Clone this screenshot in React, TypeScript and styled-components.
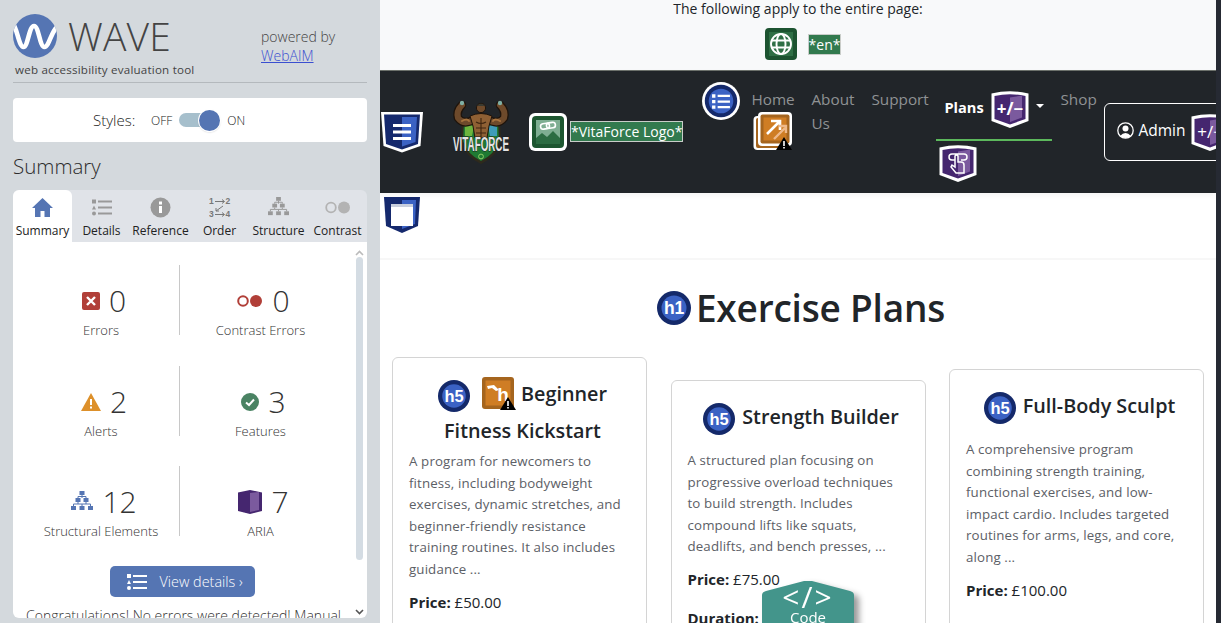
import React from 'react';
import styled, { createGlobalStyle } from 'styled-components';

const Global = createGlobalStyle`
  html, body { margin: 0; padding: 0; height: 623px; overflow: hidden; background: #fff; }
  body { font-family: "Open Sans", "Liberation Sans", sans-serif; }
  #root { height: 623px; }
  * { box-sizing: border-box; }
`;

const Page = styled.div`
  display: flex;
  width: 1221px;
  height: 623px;
  overflow: hidden;
`;

/* ---------- WAVE sidebar ---------- */
const Sidebar = styled.aside`
  width: 380px;
  flex: none;
  height: 623px;
  background: #d4d9dd;
  padding: 14px 13px 0;
  display: flex;
  flex-direction: column;
  color: #333;
`;
const Brand = styled.div`
  display: flex;
  justify-content: space-between;
  height: 69px;
  border-bottom: 1px solid #b4b9bd;
`;
const BrandLeft = styled.div`
  display: flex;
  flex-direction: column;
`;
const LogoRow = styled.div`
  display: flex;
  align-items: center;
  gap: 11px;
  height: 44px;
`;
const WaveWord = styled.span`
  font-weight: 300;
  font-size: 39px;
  letter-spacing: 0.2px;
  line-height: 46px;
  color: #444;
`;
const Tagline = styled.div`
  font-size: 11.6px;
  line-height: 16px;
  margin: 4px 0 0 2px;
  letter-spacing: 0.2px;
  color: #444;
`;
const Powered = styled.div`
  width: 106px;
  font-size: 14px;
  font-weight: 300;
  line-height: 19px;
  padding-top: 13px;
  color: #444;
  a { color: #3a4fd0; text-decoration: underline; }
`;
const StylesBox = styled.div`
  margin-top: 15px;
  height: 44px;
  background: #fff;
  border-radius: 4px;
  display: flex;
  align-items: center;
  padding-left: 80px;
`;
const StylesLabel = styled.span`
  font-size: 15px;
  font-weight: 300;
  width: 58px;
  color: #222;
`;
const OnOff = styled.span`
  font-size: 12px;
  font-weight: 300;
  color: #222;
`;
const Toggle = styled.div`
  position: relative;
  width: 40px;
  height: 14px;
  background: #a6bfcc;
  border-radius: 7px;
  margin: 0 8px 0 7px;
  &::after {
    content: '';
    position: absolute;
    right: -1px;
    top: -3.5px;
    width: 21px;
    height: 21px;
    border-radius: 50%;
    background: #5575b3;
    box-shadow: 0 0 0 1px #fff, 0 1px 2px rgba(0,0,0,.3);
  }
`;
const SummaryTitle = styled.h2`
  margin: 10px 0 10px;
  font-size: 20.5px;
  font-weight: 300;
  line-height: 28px;
  color: #2c2c2c;
`;
const Tabs = styled.div`
  display: flex;
  height: 52px;
  background: #e0e3e8;
  border-radius: 6px 6px 0 0;
`;
const Tab = styled.div<{ $active?: boolean; $w: number }>`
  width: ${p => p.$w}px;
  flex: none;
  display: flex;
  flex-direction: column;
  align-items: center;
  padding-top: 7px;
  background: ${p => (p.$active ? '#fff' : 'transparent')};
  border-radius: ${p => (p.$active ? '6px 6px 0 0' : '0')};
  font-size: 12px;
  color: #222;
  svg { height: 21px; display: block; }
  span { margin-top: 5px; line-height: 16px; white-space: nowrap; }
`;
const Panel = styled.div`
  position: relative;
  height: 376px;
  background: #fff;
  border-radius: 0 0 6px 6px;
  overflow: hidden;
`;
const StatsGrid = styled.div`
  display: grid;
  grid-template-columns: 167px 167px;
  grid-auto-rows: 70px;
  row-gap: 30.5px;
  padding-top: 23px;
`;
const Stat = styled.div<{ $left?: boolean }>`
  display: flex;
  flex-direction: column;
  align-items: center;
  border-right: ${p => (p.$left ? '1px solid #c8c8c8' : 'none')};
  padding-left: ${p => (p.$left ? '10px' : '0')};
  width: ${p => (p.$left ? '167px' : '161px')};
`;
const StatTop = styled.div`
  display: flex;
  align-items: center;
  justify-content: center;
  gap: 9px;
  height: 44px;
  margin-top: 14px;
  padding-left: 6px;
  svg { display: block; }
`;
const StatNum = styled.span`
  font-size: 30px;
  font-weight: 300;
  color: #333;
  line-height: 44px;
`;
const StatLabel = styled.div`
  font-size: 13px;
  font-weight: 300;
  line-height: 15px;
  color: #333;
  white-space: nowrap;
`;
const ScrollTrack = styled.div`
  position: absolute;
  right: 4px;
  top: 15px;
  width: 7px;
  height: 303px;
  background: #d4dce3;
  border-radius: 4px;
`;
const ScrollArrow = styled.svg<{ $top: number }>`
  position: absolute;
  right: 3px;
  top: ${p => p.$top}px;
  width: 9px;
  height: 6px;
`;
const ViewRow = styled.div`
  display: flex;
  justify-content: center;
  margin: 30px 16px 0 0;
`;
const ViewBtn = styled.div`
  width: 145px;
  height: 31px;
  background: #5575b3;
  border-radius: 5px;
  color: #fff;
  font-size: 14.4px;
  font-weight: 300;
  display: flex;
  align-items: center;
  padding-left: 17px;
  gap: 13px;
  white-space: nowrap;
  svg { display: block; flex: none; }
`;
const Congrats = styled.div`
  font-size: 14px;
  font-weight: 300;
  line-height: 18px;
  color: #333;
  margin: 10px 0 0 13px;
  white-space: nowrap;
`;

/* ---------- Page ---------- */
const Main = styled.main`
  width: 836px;
  flex: none;
  height: 623px;
  overflow: hidden;
  position: relative;
  background: #fff;
  color: #212529;
`;
const WinBar = styled.div`
  width: 5px;
  flex: none;
  background: #262a33;
`;
const Lang = styled.div`
  height: 71px;
  background: #f8f9fa;
  border-bottom: 1px solid #6d726c;
  display: flex;
  flex-direction: column;
  align-items: center;
  font-size: 14px;
  line-height: 18px;
`;
const LangRow = styled.div`
  display: flex;
  align-items: center;
  gap: 11px;
  margin: 10px 0 0 10px;
`;
const Label = styled.span`
  display: inline-block;
  background: #327a4e;
  color: #fff;
  border: 1px solid #c9cdc9;
  font-size: 14px;
  line-height: 19px;
  padding: 0;
  white-space: nowrap;
`;
const Nav = styled.nav`
  height: 122px;
  background: #212529;
  display: flex;
  align-items: center;
  box-shadow: 0 2px 6px rgba(0,0,0,.05);
  position: relative;
  overflow: hidden;
`;
const Brandish = styled.div`
  display: flex;
  align-items: center;
  flex: none;
  margin: -1px 0 0 1px;
  svg { display: block; flex: none; }
`;
const Gap = styled.span<{ $w: number }>`
  width: ${p => p.$w}px;
  flex: none;
`;
const NavList = styled.div`
  display: flex;
  align-self: flex-start;
  margin: 11px 0 0 19px;
  flex: none;
  svg { display: block; flex: none; }
`;
const NavItem = styled.div<{ $w: number; $pl?: number; $ml?: number }>`
  width: ${p => p.$w}px;
  flex: none;
  color: #8f9294;
  font-size: 15.3px;
  line-height: 24px;
  padding-top: 5px;
  padding-left: ${p => p.$pl ?? 0}px;
  margin-left: ${p => p.$ml ?? 0}px;
`;
const AlertSlot = styled.div`
  margin: 1px 0 0 2px;
`;
const PlansItem = styled.div`
  width: 116px;
  flex: none;
  margin-left: 8px;
`;
const PlansTop = styled.div`
  height: 51px;
  border-bottom: 2px solid #5cb85c;
  margin-top: 8px;
  margin-bottom: 3px;
  display: flex;
  align-items: flex-start;
  padding-left: 8px;
  color: #fff;
  font-weight: 700;
  font-size: 14.6px;
  line-height: 20px;
  b { margin: 7px 7px 0 0; font-weight: 700; }
`;
const TapSlot = styled.div`
  padding-left: 3px;
`;
const Caret = styled.i`
  width: 0;
  height: 0;
  border: 4px solid transparent;
  border-top-color: #fff;
  border-bottom: 0;
  margin: 14px 0 0 7px;
`;
const AdminBtn = styled.div`
  flex: none;
  height: 58px;
  width: 140px;
  margin: 21px 0 0 8px;
  border: 1px solid #fff;
  border-radius: 6px;
  display: flex;
  align-items: center;
  padding: 0 0 4px 12px;
  color: #fff;
  font-size: 15.5px;
  gap: 4px;
  align-self: flex-start;
  svg { display: block; flex: none; }
  svg:last-child { margin: 4px 0 0 2px; }
`;
const Section = styled.div`
  height: 67px;
  border-bottom: 2px solid #f7f7f7;
  padding: 4px 0 0 4px;
  svg { display: block; }
`;
const Heading = styled.h1`
  margin: 26px 0 0;
  padding-left: 6px;
  display: flex;
  justify-content: center;
  align-items: center;
  gap: 5px;
  font-size: 37px;
  font-weight: 600;
  line-height: 44px;
  letter-spacing: -0.2px;
  svg { display: block; }
`;
const Cards = styled.div`
  display: grid;
  grid-template-columns: repeat(3, 255px);
  column-gap: 23.5px;
  padding-left: 12px;
  align-items: start;
`;
const Card = styled.article<{ $top: number }>`
  margin-top: ${p => p.$top}px;
  height: 400px;
  border: 1px solid #d4d4d4;
  border-radius: 6px;
  padding: 17px 16px 0;
`;
const CardTitle = styled.h5<{ $gap: number }>`
  margin: 0 0 ${p => p.$gap}px;
  padding-left: 6px;
  font-size: 19.8px;
  line-height: 37px;
  font-weight: 600;
  text-align: center;
  svg { display: inline-block; vertical-align: middle; margin: -4px 7px -4px 0; }
`;
const Spacer = styled.span`
  display: inline-block;
  width: 5px;
`;
const TitleStart = styled.span`
  margin-left: -3px;
`;
const Desc = styled.p`
  margin: 0 0 11px;
  font-size: 13.3px;
  line-height: 21.6px;
  color: #5c6066;
  letter-spacing: 0.13px;
`;
const Price = styled.p`
  margin: 0 0 18px;
  font-size: 15px;
  line-height: 21px;
  b { font-weight: 700; }
`;
const CodeTab = styled.div`
  position: absolute;
  left: 382px;
  top: 581px;
  width: 92px;
  height: 50px;
  filter: drop-shadow(5px 4px 3px rgba(0,0,0,.4));
  svg { position: absolute; inset: 0; }
`;
const CodeLabel = styled.span`
  position: absolute;
  left: 0;
  right: 0;
  top: 26px;
  text-align: center;
  color: #fff;
  font-size: 15px;
  line-height: 20px;
`;
const CodeGlyph = styled.span`
  position: absolute;
  left: 0;
  right: 0;
  top: -2px;
  text-align: center;
  color: #fff;
  font-size: 30px;
  font-weight: 400;
  line-height: 36px;
  letter-spacing: 2px;
`;

/* ---------- Icons ---------- */
const Shield: React.FC<{ dark: string; light: string; size?: number; children?: React.ReactNode }> = ({ dark, light, size = 38, children }) => (
  <svg width={size} height={size} viewBox="0 0 38 38">
    <path d="M0.5 3.5 Q19 -1 37.5 3.5 V31 L19 38 L0.5 31 Z" fill="#fff" />
    <path d="M3.5 6 Q19 2.5 34.5 6 V29 L19 34.5 L3.5 29 Z" fill={dark} />
    <path d="M19 7.5 L31 5.5 V27.5 L19 32 Z" fill={light} />
    {children}
  </svg>
);
const Hamburger = () => (
  <svg width="42" height="42" viewBox="0 0 42 42">
    <path d="M0 1 H42 L39.5 35 L21 41.5 L2.5 35 Z" fill="#fff" />
    <path d="M3 3.5 H39 L37 33 L21 38.5 L5 33 Z" fill="#15296d" />
    <path d="M21 6 H36 L34.5 31 L21 35.5 Z" fill="#3b62c4" />
    <path d="M12 13 h18 v3 h-18z M12 19.5 h18 v3 h-18z M12 26 h18 v3 h-18z" fill="#fff" />
  </svg>
);
const HeaderShield = () => (
  <svg width="36" height="36" viewBox="0 0 36 36">
    <path d="M0 0 H36 L34 29 L18 36 L2 29 Z" fill="#15296d" />
    <path d="M18 3 H32 L31 27 L18 32 Z" fill="#3b62c4" />
    <path d="M7 7 H29 V29 H7 Z" fill="#fff" />
    <path d="M7 7 H29 V10 H7 Z" fill="#c8cedd" />
  </svg>
);
const Round: React.FC<{ label?: string; size?: number; ring?: boolean; children?: React.ReactNode }> = ({ label, size = 34, ring, children }) => (
  <svg width={size} height={size} viewBox="0 0 34 34">
    {ring && <circle cx="17" cy="17" r="17" fill="#fff" />}
    <circle cx="17" cy="17" r={ring ? 14.5 : 17} fill="#14296a" />
    <circle cx="17" cy="17" r={ring ? 11 : 12.5} fill="#3b62c4" />
    {label && <text x="17" y="23" textAnchor="middle" fontSize="17.5" fill="#fff" fontFamily="Liberation Sans, sans-serif">{label}</text>}
    {children}
  </svg>
);
const Warn = ({ x, y }: { x: number; y: number }) => (
  <g transform={`translate(${x} ${y})`}>
    <path d="M8 0 L16 13 H0 Z" fill="#000" />
    <path d="M7.2 4 h1.6 v5 h-1.6z M7.2 10 h1.6 v1.6 h-1.6z" fill="#fff" />
  </g>
);
const AlertHeading = () => (
  <svg width="35" height="37" viewBox="0 0 35 37">
    <rect x="0" y="0" width="32" height="32" rx="3" fill="#a5651e" />
    <rect x="3.5" y="3.5" width="25" height="25" fill="#cf7d24" />
    <path d="M5 9 L12 8 L17 13 L14 14 L10 11 L6 12 Z" fill="#fff" />
    <text x="21" y="24" textAnchor="middle" fontSize="19" fill="#fff" fontFamily="Liberation Sans, sans-serif">h</text>
    <Warn x={18} y={20} />
  </svg>
);
const ExternalIcon = () => (
  <svg width="40" height="40" viewBox="0 0 40 40">
    <rect x="0.5" y="4" width="33" height="34" rx="4" fill="#fff" />
    <rect x="3" y="6" width="30" height="30" rx="2" fill="#a5651e" />
    <rect x="5" y="0" width="34" height="34" rx="4" fill="#fff" />
    <rect x="7.5" y="2.5" width="29" height="29" rx="2" fill="#a5651e" />
    <rect x="10.5" y="5.5" width="23" height="23" fill="#cf7d24" />
    <path d="M14 22 L26 10 M18 9 H27 V18" stroke="#fff" strokeWidth="2.6" fill="none" />
    <path d="M21 27 L32 16 M26 14 H33 V21" stroke="#eeb98b" strokeWidth="2.4" fill="none" />
    <Warn x={23} y={25} />
  </svg>
);
const ImageLink = () => (
  <svg width="38" height="38" viewBox="0 0 38 38">
    <rect width="38" height="38" rx="6" fill="#fff" />
    <rect x="3" y="3" width="32" height="32" rx="4" fill="#1d5630" />
    <rect x="7" y="7" width="24" height="24" fill="#7fae92" />
    <path d="M7 25 L13 20 L18 24 L24 18 L31 25 V31 H7 Z" fill="#2c6c42" />
    <g fill="none" stroke="#fff" strokeWidth="1.6" transform="rotate(-8 19 13)">
      <rect x="11.5" y="10" width="9" height="5.5" rx="2.7" />
      <rect x="17.5" y="10" width="9" height="5.5" rx="2.7" />
    </g>
  </svg>
);
const LangIcon = () => (
  <svg width="32" height="32" viewBox="0 0 32 32">
    <rect width="32" height="32" rx="4" fill="#1c5330" />
    <rect x="4" y="4" width="24" height="24" fill="#2f6f45" />
    <g fill="none" stroke="#fff" strokeWidth="1.9">
      <circle cx="16" cy="16" r="10" />
      <ellipse cx="16" cy="16" rx="4.5" ry="10" />
      <path d="M6.5 12.5 H25.5 M6.5 19.5 H25.5" />
    </g>
  </svg>
);
const Logo = () => (
  <svg width="58" height="68" viewBox="0 0 58 68">
    {/* crest */}
    <path d="M10 21 Q29 27 48 21 L49 44 Q45 58 29 66 Q13 58 9 44 Z" fill="#2e2a1c" />
    <path d="M12 24 Q29 29 46 24 L47 43 Q43 56 29 63 Q15 56 11 43 Z" fill="#1f7a33" />
    <path d="M13 26 L22 28 L20 38 L13 38 Z" fill="#6cb53e" />
    <path d="M36 28 L45 26 L45 38 L38 38 Z" fill="#3f9cb8" />
    {/* arms */}
    <g fill="none" strokeLinecap="round">
      <path d="M23 21 Q12 28 6 20 Q4 13 10 7 M35 21 Q46 28 52 20 Q54 13 48 7" stroke="#1f140b" strokeWidth="8.5" />
      <path d="M23 21 Q12 28 6 20 Q4 13 10 7 M35 21 Q46 28 52 20 Q54 13 48 7" stroke="#6e4a2b" strokeWidth="6" />
      <path d="M10 23 Q15 20 17 23 M48 23 Q43 20 41 23" stroke="#a8743f" strokeWidth="2" />
    </g>
    {/* torso and head */}
    <path d="M18 18 Q29 13 40 18 L37 28 L35 40 H23 L21 28 Z" fill="#8f6034" stroke="#1f140b" strokeWidth="1" />
    <path d="M29 20 V40 M24 24 Q29 27 34 24 M24 30 H34 M24 35 H34" stroke="#3f2510" strokeWidth="1.1" fill="none" />
    <circle cx="29" cy="10" r="4.6" fill="#6e4a2b" stroke="#1f140b" />
    <path d="M25 8 Q29 3 33 8 Z" fill="#3a3a30" />
    <circle cx="10" cy="5" r="2.2" fill="#7fb0a5" />
    <circle cx="48" cy="5" r="2.2" fill="#7fb0a5" />
    {/* wordmark */}
    <text x="29" y="53" textAnchor="middle" fontFamily="Liberation Sans, sans-serif" fontSize="21" fontWeight="700" textLength="56" lengthAdjust="spacingAndGlyphs" fill="#e4e4e4" stroke="#1a1a1a" strokeWidth="1.2" paintOrder="stroke">VITAFORCE</text>
    <circle cx="29" cy="58.5" r="2.4" fill="none" stroke="#8fce64" />
  </svg>
);
const WaveLogo = () => (
  <svg width="44" height="44" viewBox="0 0 44 44">
    <clipPath id="waveclip"><circle cx="22" cy="22" r="22" /></clipPath>
    <circle cx="22" cy="22" r="22" fill="#5575b3" />
    <path d="M0 10 C4 14 6 33 10.5 33 C15 33 16 12 21 12 C26 12 26.5 33 31.5 33 C36 33 38 18 44 13" fill="none" stroke="#fff" strokeWidth="4.6" clipPath="url(#waveclip)" />
  </svg>
);
const ListIcon = ({ color = '#999', h = 18 }: { color?: string; h?: number }) => (
  <svg width="20" height={h} viewBox="0 0 20 18">
    <path d="M0 1h4v4H0z M2 7l2 4H0z" fill={color} />
    <circle cx="2" cy="15" r="2" fill={color} />
    <path d="M6 2h14v2H6z M6 8h14v2H6z M6 14h14v2H6z" fill={color} />
  </svg>
);
const Structure = ({ color = '#999', size = 22 }: { color?: string; size?: number }) => (
  <svg width={size} height={size} viewBox="0 0 22 22">
    <g fill={color}>
      <rect x="8.5" y="0" width="5" height="4" />
      <rect x="4.5" y="7" width="5" height="4" />
      <rect x="12.5" y="7" width="5" height="4" />
      <rect x="0" y="15" width="5" height="4" />
      <rect x="8.5" y="15" width="5" height="4" />
      <rect x="17" y="15" width="5" height="4" />
    </g>
    <path d="M11 4 V7 M7 7 V5.5 H15 V7 M7 11 V13 H2.5 V15 M15 11 V13 H19.5 V15 M7 13 H15 M11 13 V15" stroke={color} fill="none" />
  </svg>
);
const Cube = () => (
  <svg width="24" height="24" viewBox="0 0 24 24">
    <path d="M0 2.5 L12 0 L24 2.5 V21 L12 24 L0 21 Z" fill="#45266f" />
    <path d="M12 3 L21 2 V20 L12 22 Z" fill="#7b5a9e" />
  </svg>
);
const SumTab = () => (
  <svg viewBox="0 0 21 21" width="21" height="21"><path d="M10.5 1 L21 11 H18 V20 H12.5 V14 H8.5 V20 H3 V11 H0 Z" fill="#5575b3" /></svg>
);
const InfoTab = () => (
  <svg viewBox="0 0 21 21" width="21" height="21"><circle cx="10.5" cy="10.5" r="10" fill="#999" /><path d="M9 9h3v7H9z M9 4.5h3v3H9z" fill="#fff" /></svg>
);
const OrderTab = () => (
  <svg viewBox="0 0 22 21" width="22" height="21">
    <g fontFamily="Liberation Sans, sans-serif" fontSize="8.5" fontWeight="700" fill="#777">
      <text x="0" y="7">1</text><text x="16.5" y="7">2</text><text x="0" y="20">3</text><text x="16.5" y="20">4</text>
    </g>
    <path d="M6 4.5H15 M13 2.5 L15.5 4.5 L13 6.5 M6 17.5H15 M13 15.5 L15.5 17.5 L13 19.5 M14 9 L7 14 M7 11 V14 H10" stroke="#777" fill="none" />
  </svg>
);
const ContrastTab = () => (
  <svg viewBox="0 0 26 21" width="26" height="21">
    <circle cx="6" cy="10.5" r="4.8" fill="none" stroke="#b3b3b3" strokeWidth="1.8" />
    <circle cx="19" cy="10.5" r="6" fill="#b3b3b3" />
  </svg>
);
const Plus = () => (
  <Shield dark="#45266f" light="#7b5a9e">
    <text x="19" y="25" textAnchor="middle" fontFamily="Open Sans, sans-serif" fontSize="17" fill="#fff">+/−</text>
  </Shield>
);
const Tap = () => (
  <Shield dark="#45266f" light="#7b5a9e">
    <path d="M16 16 H13 Q10 16 10 13 Q10 10 13 10 H25 Q28 10 28 13 Q28 16 25 16 H22 M16 12 V23 L13 21 L12 23 L17 29 H25 V21 Q25 18 22 18 L19 18 V12 Q17.5 10 16 12 Z" fill="none" stroke="#fff" strokeWidth="1.5" />
  </Shield>
);

export default function App() {
  return (
    <Page>
      <Global />
      <Sidebar>
        <Brand>
          <BrandLeft>
            <LogoRow><WaveLogo /><WaveWord>WAVE</WaveWord></LogoRow>
            <Tagline>web accessibility evaluation tool</Tagline>
          </BrandLeft>
          <Powered>powered by<br /><a href="#w">WebAIM</a></Powered>
        </Brand>
        <StylesBox>
          <StylesLabel>Styles:</StylesLabel>
          <OnOff>OFF</OnOff><Toggle /><OnOff>ON</OnOff>
        </StylesBox>
        <SummaryTitle>Summary</SummaryTitle>
        <Tabs>
          <Tab $active $w={59}><SumTab /><span>Summary</span></Tab>
          <Tab $w={59}><ListIcon h={21} /><span>Details</span></Tab>
          <Tab $w={59}><InfoTab /><span>Reference</span></Tab>
          <Tab $w={59}><OrderTab /><span>Order</span></Tab>
          <Tab $w={59}><Structure size={21} /><span>Structure</span></Tab>
          <Tab $w={59}><ContrastTab /><span>Contrast</span></Tab>
        </Tabs>
        <Panel>
          <StatsGrid>
            <Stat $left>
              <StatTop>
                <svg width="18" height="18" viewBox="0 0 18 18"><rect width="18" height="18" rx="2" fill="#b13f38" /><path d="M5 5 L13 13 M13 5 L5 13" stroke="#fff" strokeWidth="2.4" /></svg>
                <StatNum>0</StatNum>
              </StatTop>
              <StatLabel>Errors</StatLabel>
            </Stat>
            <Stat>
              <StatTop>
                <svg width="26" height="14" viewBox="0 0 26 14"><circle cx="6" cy="7" r="4.8" fill="none" stroke="#b13f38" strokeWidth="2" /><circle cx="19" cy="7" r="6" fill="#b13f38" /></svg>
                <StatNum>0</StatNum>
              </StatTop>
              <StatLabel>Contrast Errors</StatLabel>
            </Stat>
            <Stat $left>
              <StatTop>
                <svg width="20" height="18" viewBox="0 0 20 18"><path d="M10 0 L20 18 H0 Z" fill="#dd902a" /><path d="M9 6h2v6H9z M9 13.5h2v2H9z" fill="#fff" /></svg>
                <StatNum>2</StatNum>
              </StatTop>
              <StatLabel>Alerts</StatLabel>
            </Stat>
            <Stat>
              <StatTop>
                <svg width="18" height="18" viewBox="0 0 18 18"><circle cx="9" cy="9" r="9" fill="#4a8363" /><path d="M5 9.5 L8 12 L13 6.5" fill="none" stroke="#fff" strokeWidth="2" /></svg>
                <StatNum>3</StatNum>
              </StatTop>
              <StatLabel>Features</StatLabel>
            </Stat>
            <Stat $left>
              <StatTop><Structure color="#5575b3" /><StatNum>12</StatNum></StatTop>
              <StatLabel>Structural Elements</StatLabel>
            </Stat>
            <Stat>
              <StatTop><Cube /><StatNum>7</StatNum></StatTop>
              <StatLabel>ARIA</StatLabel>
            </Stat>
          </StatsGrid>
          <ViewRow>
            <ViewBtn><ListIcon color="#fff" />View details ›</ViewBtn>
          </ViewRow>
          <Congrats>Congratulations! No errors were detected! Manual</Congrats>
          <ScrollTrack />
          <ScrollArrow $top={8} viewBox="0 0 9 6"><path d="M1 5 L4.5 1.5 L8 5" fill="none" stroke="#bbb" strokeWidth="1.6" /></ScrollArrow>
          <ScrollArrow $top={367} viewBox="0 0 9 6"><path d="M1 1 L4.5 4.5 L8 1" fill="none" stroke="#555" strokeWidth="1.6" /></ScrollArrow>
        </Panel>
      </Sidebar>

      <Main>
        <Lang>
          <span>The following apply to the entire page:</span>
          <LangRow><LangIcon /><Label>*en*</Label></LangRow>
        </Lang>
        <Nav>
          <Brandish>
            <Hamburger />
            <Gap $w={29} />
            <Logo />
            <Gap $w={19} />
            <ImageLink />
            <Gap $w={3} />
            <Label>*VitaForce Logo*</Label>
          </Brandish>
          <NavList>
            <Round ring size={38}><path d="M9 11h3v3H9z M9 16h3v3H9z M9 21h3v3H9z M14 11.5h11v2H14z M14 16.5h11v2H14z M14 21.5h11v2H14z" fill="#fff" /></Round>
            <NavItem $w={71} $pl={11}>Home<AlertSlot><ExternalIcon /></AlertSlot></NavItem>
            <NavItem $w={60}>About Us</NavItem>
            <NavItem $w={57}>Support</NavItem>
            <PlansItem>
              <PlansTop><b>Plans</b><Plus /><Caret /></PlansTop>
              <TapSlot><Tap /></TapSlot>
            </PlansItem>
            <NavItem $w={36} $ml={8}>Shop</NavItem>
            <AdminBtn>
              <svg width="17" height="17" viewBox="0 0 17 17"><circle cx="8.5" cy="8.5" r="7.7" fill="none" stroke="#fff" strokeWidth="1.3" /><circle cx="8.5" cy="6.5" r="3" fill="#fff" /><path d="M3 14 Q8.5 8 14 14 Q8.5 18 3 14Z" fill="#fff" /></svg>
              Admin
              <Plus />
            </AdminBtn>
          </NavList>
        </Nav>
        <Section><HeaderShield /></Section>
        <Heading><Round label="h1" />Exercise Plans</Heading>
        <Cards>
          <Card $top={27}>
            <CardTitle $gap={2}>
              <Round label="h5" size={32} /><Spacer /><AlertHeading /><TitleStart>Beginner</TitleStart> Fitness Kickstart
            </CardTitle>
            <Desc>A program for newcomers to fitness, including bodyweight exercises, dynamic stretches, and beginner-friendly resistance training routines. It also includes guidance ...</Desc>
            <Price><b>Price:</b> £50.00</Price>
          </Card>
          <Card $top={50}>
            <CardTitle $gap={15}><Round label="h5" size={32} />Strength Builder</CardTitle>
            <Desc>A structured plan focusing on progressive overload techniques to build strength. Includes compound lifts like squats, deadlifts, and bench presses, ...</Desc>
            <Price><b>Price:</b> £75.00</Price>
            <Price><b>Duration:</b> 8 weeks</Price>
          </Card>
          <Card $top={39}>
            <CardTitle $gap={15}><Round label="h5" size={32} />Full-Body Sculpt</CardTitle>
            <Desc>A comprehensive program combining strength training, functional exercises, and low-impact cardio. Includes targeted routines for arms, legs, and core, along ...</Desc>
            <Price><b>Price:</b> £100.00</Price>
          </Card>
        </Cards>
        <CodeTab>
          <svg width="92" height="50" viewBox="0 0 92 50"><path d="M0 14 Q0 11 4 10 L42 0 Q46 -1 50 0 L88 10 Q92 11 92 14 V50 H0 Z" fill="#43958b" /></svg>
          <CodeGlyph>&lt;/&gt;</CodeGlyph>
          <CodeLabel>Code</CodeLabel>
        </CodeTab>
      </Main>
      <WinBar />
    </Page>
  );
}
